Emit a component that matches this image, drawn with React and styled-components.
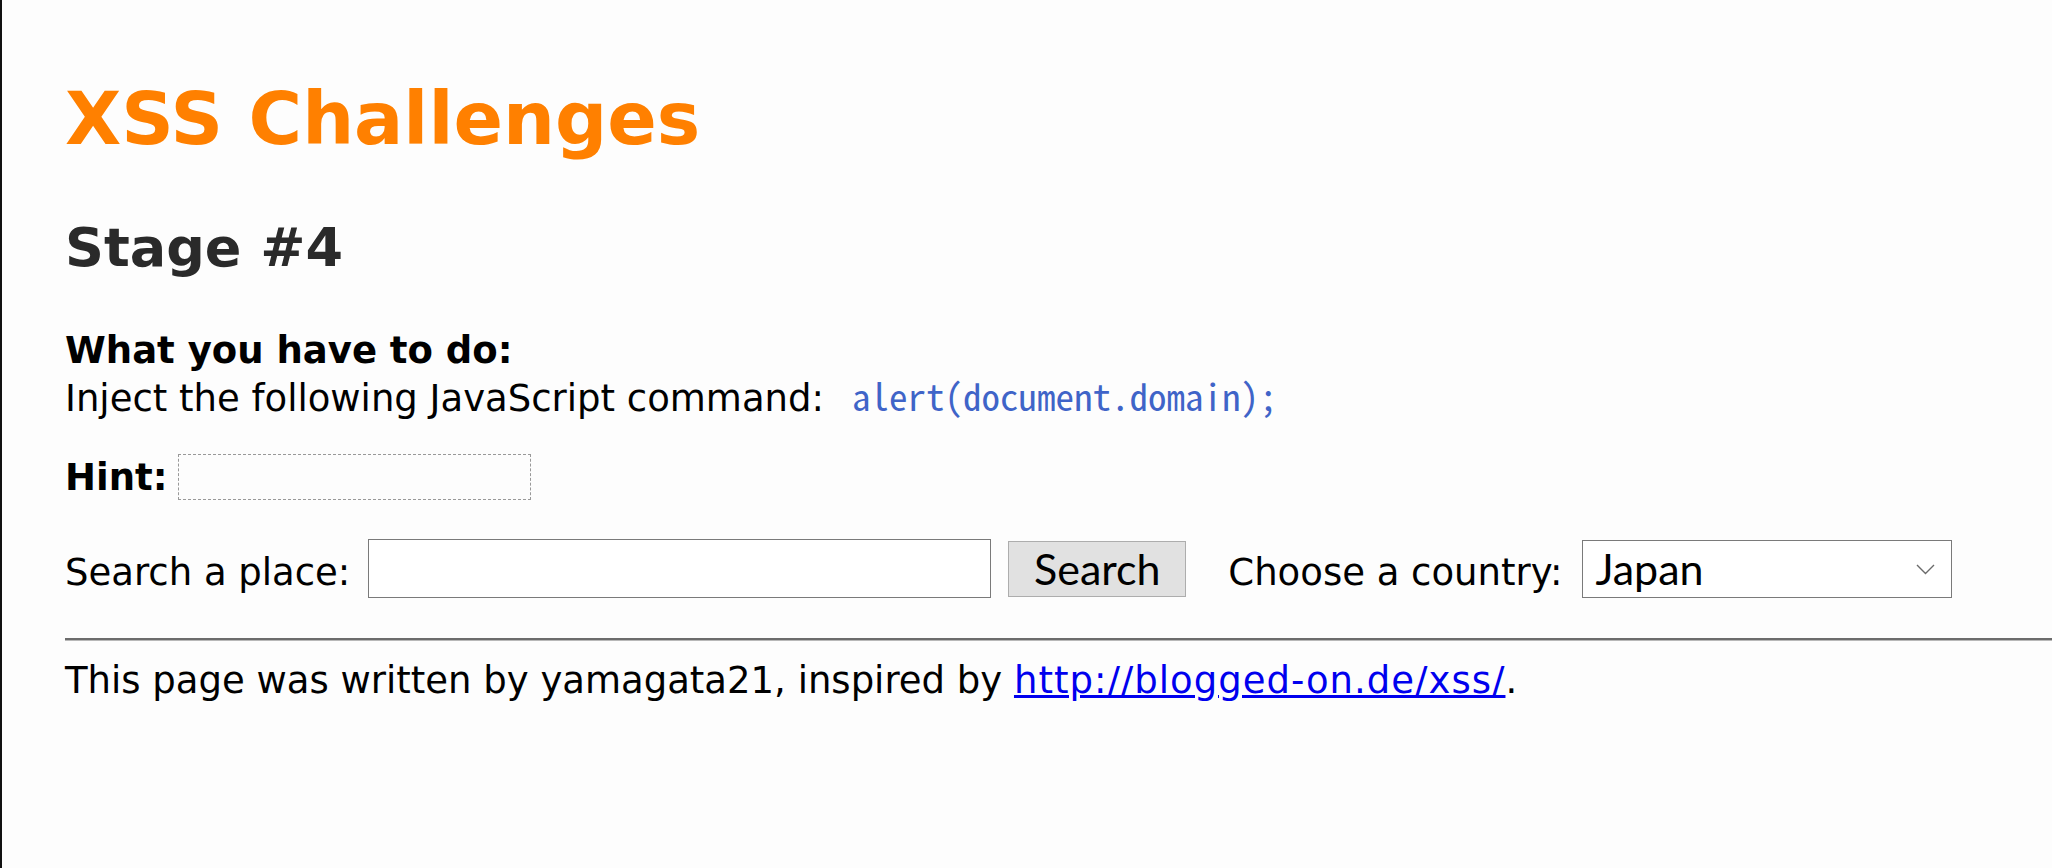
import React from "react";
import styled, { createGlobalStyle } from "styled-components";

const GlobalStyle = createGlobalStyle`
  html, body {
    margin: 0;
    padding: 0;
    background: #fdfdfd;
  }
  #root {
    min-height: 100vh;
  }
`;

const Page = styled.div`
  min-height: 100vh;
  box-sizing: border-box;
  border-left: 2px solid #111;
  padding: 75px 0 0 63px;
  font-family: "DejaVu Sans", Verdana, sans-serif;
  font-size: 37px;
  line-height: 45px;
  color: #000;
`;

const Title = styled.h1`
  margin: 0;
  font-size: 73px;
  line-height: 88px;
  font-weight: bold;
  color: #ff8000;
`;

const Stage = styled.h2`
  margin: 53px 0 0;
  font-size: 54px;
  line-height: 64px;
  font-weight: bold;
  color: #2a2a2a;
`;

const Task = styled.div`
  margin-top: 48px;
`;

const Strong = styled.b`
  font-weight: bold;
`;

const Code = styled.code`
  margin-left: 28px;
  font-family: "Noto Sans Mono CJK SC", "Liberation Mono", monospace;
  font-size: 37px;
  color: #3f64c8;
`;

const Row = styled.div`
  display: flex;
  align-items: ${(p) => p.$align || "baseline"};
  margin-top: ${(p) => p.$top}px;
`;

const HintBox = styled.span`
  display: inline-block;
  box-sizing: border-box;
  width: 353px;
  height: 46px;
  margin-left: 11px;
  border: 1px dashed #999;
`;

const Control = `
  box-sizing: border-box;
  font-family: Lato, "Open Sans", sans-serif;
  font-size: 43px;
  color: #000;
  margin: 0;
`;

const TextInput = styled.input`
  ${Control}
  width: 623px;
  height: 59px;
  margin-left: 18px;
  padding: 0 8px;
  border: 1px solid #7a7a7a;
  background: #fff;
  outline: none;
`;

const Button = styled.button`
  ${Control}
  width: 178px;
  height: 56px;
  margin-left: 17px;
  padding: 0;
  border: 1px solid #adadad;
  background: #e1e1e1;
`;

const Label = styled.span`
  margin-left: ${(p) => p.$left || 0}px;
  white-space: pre;
`;

const SelectWrap = styled.span`
  position: relative;
  display: inline-block;
  margin-left: 20px;
`;

const Select = styled.select`
  ${Control}
  appearance: none;
  -webkit-appearance: none;
  width: 370px;
  height: 58px;
  padding: 0 0 0 12px;
  border: 1px solid #7a7a7a;
  border-radius: 0;
  background: #fff;
  outline: none;
`;

const Chevron = styled.svg`
  position: absolute;
  right: 17px;
  top: 24px;
  width: 19px;
  height: 11px;
  pointer-events: none;
`;

const Rule = styled.hr`
  margin: 40px 0 0;
  height: 0;
  border: none;
  border-top: 2px solid #6c6c6c;
  border-bottom: 1px solid #b8b8b8;
`;

const Footer = styled.p`
  margin: 17px 0 0;
`;

const Link = styled.a`
  color: #0000ee;
  text-decoration: underline;
  letter-spacing: 1px;
`;

export default function App() {
  return (
    <>
      <GlobalStyle />
      <Page>
        <Title>XSS Challenges</Title>
        <Stage>Stage #4</Stage>
        <Task>
          <Strong>What you have to do:</Strong>
          <br />
          Inject the following JavaScript command:
          <Code>alert(document.domain);</Code>
        </Task>
        <Row $top={33} $align="center">
          <Strong>Hint:</Strong>
          <HintBox />
        </Row>
        <Row $top={39}>
          <Label>Search a place:</Label>
          <TextInput type="text" />
          <Button type="button">Search</Button>
          <Label $left={42}>Choose a country:</Label>
          <SelectWrap>
            <Select defaultValue="Japan">
              <option>Japan</option>
              <option>Germany</option>
              <option>USA</option>
              <option>United Kingdom</option>
            </Select>
            <Chevron viewBox="0 0 19 11" fill="none">
              <path d="M1 1 L9.5 9.5 L18 1" stroke="#6a6a6a" strokeWidth="1.4" />
            </Chevron>
          </SelectWrap>
        </Row>
        <Rule />
        <Footer>
          This page was written by yamagata21, inspired by{" "}
          <Link href="#">http://blogged-on.de/xss/</Link>.
        </Footer>
      </Page>
    </>
  );
}
